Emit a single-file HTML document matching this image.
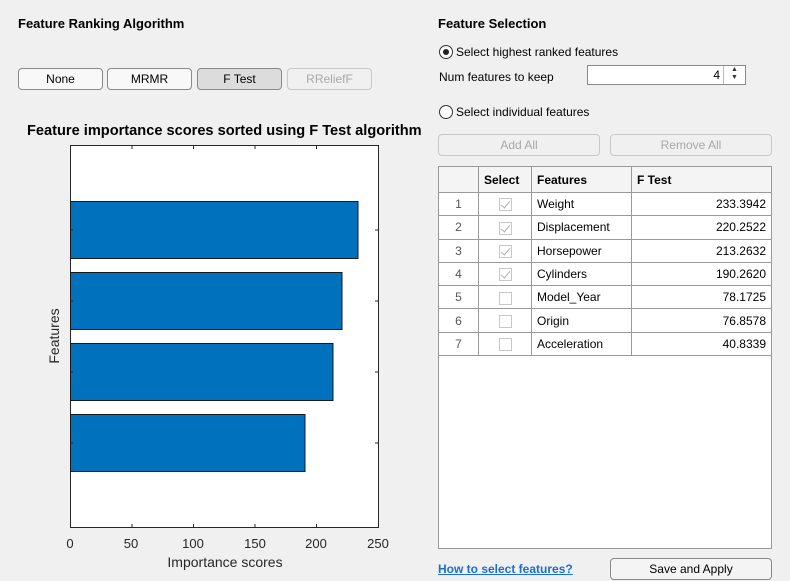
<!DOCTYPE html>
<html><head><style>
*{box-sizing:border-box}
body{margin:0;width:790px;height:581px;background:#f0f0f0;font-family:"Liberation Sans",Arial,sans-serif;font-size:12px;color:#000;position:relative;overflow:hidden}
.a{position:absolute}
.btn{position:absolute;height:22px;border:1px solid #8a8a8a;border-radius:4px;background:#f8f8f8;text-align:center;line-height:20px;font-size:12px}
.dis{border-color:#c8c8c8;color:#a8a8a8;background:#f0f0f0}
.h{font-weight:bold;font-size:13px}
table{border-collapse:collapse;font-size:12px}
td{border:1px solid #999;height:23.3px;padding:0 5px;background:#fff}
.n{text-align:center;color:#555}
.r{text-align:right}
.cb{display:inline-block;width:13px;height:13px;border:1px solid #c8c8c8;background:#fff;vertical-align:middle;position:relative}
.cb.c::after{content:"";position:absolute;left:3px;top:0px;width:4px;height:8px;border:solid #b0b0b0;border-width:0 1.5px 1.5px 0;transform:rotate(40deg)}
</style></head><body>
<div class="a h" style="left:18px;top:16px">Feature Ranking Algorithm</div>
<div class="btn" style="left:18px;top:68px;width:85px">None</div>
<div class="btn" style="left:107px;top:68px;width:85px">MRMR</div>
<div class="btn" style="left:197px;top:68px;width:85px;background:#dcdcdc">F Test</div>
<div class="btn dis" style="left:287px;top:68px;width:85px">RReliefF</div>
<div class="a" style="left:27px;top:123px;font-size:14.6px;font-weight:bold">Feature importance scores sorted using F Test algorithm</div>
<svg class="a" style="left:0;top:0" width="430" height="581">
<rect x="70.5" y="145.5" width="308" height="382" fill="#fff" stroke="#262626"/>
<g fill="#0072bd" stroke="#1a1a1a">
<rect x="70.5" y="201.5" width="287.5" height="57"/>
<rect x="70.5" y="272.5" width="271.5" height="57"/>
<rect x="70.5" y="343.5" width="262.5" height="57"/>
<rect x="70.5" y="414.5" width="234.5" height="57"/>
</g>
<g stroke="#262626">
<path d="M132 146v3M193.5 146v3M255 146v3M316.5 146v3M132 527v-3M193.5 527v-3M255 527v-3M316.5 527v-3"/>
<path d="M70 230h3M70 301h3M70 372h3M70 443h3M378 230h-3M378 301h-3M378 372h-3M378 443h-3"/>
</g>
<g font-size="13" fill="#262626" text-anchor="middle" font-family="Liberation Sans,sans-serif">
<text x="70" y="548">0</text><text x="131" y="548">50</text><text x="193" y="548">100</text><text x="255" y="548">150</text><text x="316" y="548">200</text><text x="378" y="548">250</text>
<text x="225" y="567" font-size="14">Importance scores</text>
<text transform="translate(59,336) rotate(-90)" font-size="14">Features</text>
</g>
</svg>
<div class="a h" style="left:438px;top:16px">Feature Selection</div>
<div class="a" style="left:439px;top:45px;width:14px;height:14px;border:1px solid #333;border-radius:50%;background:#fff"><div style="position:absolute;left:3px;top:3px;width:6px;height:6px;border-radius:50%;background:#222"></div></div>
<div class="a" style="left:456px;top:45px">Select highest ranked features</div>
<div class="a" style="left:439px;top:70px">Num features to keep</div>
<div class="a" style="left:587px;top:65px;width:159px;height:20px;border:1px solid #8a8a8a;background:#fff"><span style="position:absolute;right:25px;top:2px">4</span><div style="position:absolute;right:0;top:0;width:22px;height:18px;border-left:1px solid #bbb;font-size:7px;text-align:center;line-height:8px;color:#333">▲<br>▼</div></div>
<div class="a" style="left:439px;top:105px;width:14px;height:14px;border:1px solid #333;border-radius:50%;background:#fff"></div>
<div class="a" style="left:456px;top:105px">Select individual features</div>
<div class="btn dis" style="left:438px;top:134px;width:162px">Add All</div>
<div class="btn dis" style="left:610px;top:134px;width:162px">Remove All</div>
<div class="a" style="left:438px;top:166px;width:334px;height:383px;border:1px solid #999;background:#fff"></div>
<table class="a" style="left:438px;top:166px;width:334px">
<tr style="font-weight:bold"><td style="width:40px;height:26px;background:#f4f4f4"></td><td style="width:53px;background:#f4f4f4">Select</td><td style="width:100px;background:#f4f4f4">Features</td><td style="background:#f4f4f4">F Test</td></tr>
<tr><td class="n">1</td><td class="n"><span class="cb c"></span></td><td>Weight</td><td class="r">233.3942</td></tr>
<tr><td class="n">2</td><td class="n"><span class="cb c"></span></td><td>Displacement</td><td class="r">220.2522</td></tr>
<tr><td class="n">3</td><td class="n"><span class="cb c"></span></td><td>Horsepower</td><td class="r">213.2632</td></tr>
<tr><td class="n">4</td><td class="n"><span class="cb c"></span></td><td>Cylinders</td><td class="r">190.2620</td></tr>
<tr><td class="n">5</td><td class="n"><span class="cb"></span></td><td>Model_Year</td><td class="r">78.1725</td></tr>
<tr><td class="n">6</td><td class="n"><span class="cb"></span></td><td>Origin</td><td class="r">76.8578</td></tr>
<tr><td class="n">7</td><td class="n"><span class="cb"></span></td><td>Acceleration</td><td class="r">40.8339</td></tr>
</table>
<div class="a" style="left:438px;top:562px;color:#1a6fd0;font-weight:bold;text-decoration:underline">How to select features?</div>
<div class="btn" style="left:610px;top:558px;width:162px;background:#f4f4f4">Save and Apply</div>
</body></html>
